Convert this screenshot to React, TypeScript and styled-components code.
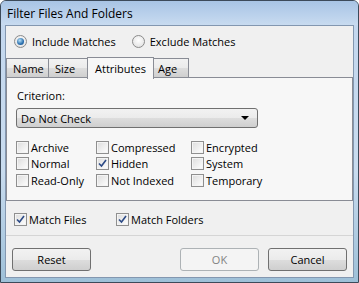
import styled, { createGlobalStyle } from 'styled-components'

const GlobalStyle = createGlobalStyle`
  html, body {
    margin: 0;
    padding: 0;
    background: #ffffff;
  }
  body {
    font-family: 'Open Sans', 'Noto Sans', sans-serif;
    font-size: 11px;
    color: #000;
  }
`

const Window = styled.div`
  width: 359px;
  height: 283px;
  box-sizing: border-box;
  border: 1px solid #3c4a5a;
  border-radius: 6px 6px 0 0;
  background: linear-gradient(to bottom, #a9c5e6 0%, #c3d7ee 20px, #c9dcef 60%, #9ec0d8 100%);
  display: flex;
  flex-direction: column;
  overflow: hidden;
`

const TitleBar = styled.div`
  height: 24px;
  padding-left: 6px;
  display: flex;
  align-items: center;
  font-size: 12px;
  background: linear-gradient(to bottom, #a8c4e5, #c8dbf0);
`

const Client = styled.div`
  flex: 1;
  margin: 0 4px 4px 4px;
  border: 1px solid #8397b0;
  background: #f0f0f0;
  display: flex;
  flex-direction: column;
`

const RadioRow = styled.div`
  display: flex;
  gap: 16px;
  padding: 8px 0 0 8px;
  height: 22px;
`

const Choice = styled.label`
  display: flex;
  align-items: center;
  gap: 5px;
  height: 14px;
`

const RadioDot = styled.span<{ $on?: boolean }>`
  width: 11px;
  height: 11px;
  border-radius: 50%;
  border: 1px solid #8b8b8b;
  background: radial-gradient(circle at 50% 40%, #ffffff, #dcdcdc);
  position: relative;
  &::after {
    content: '';
    display: ${(p) => (p.$on ? 'block' : 'none')};
    position: absolute;
    left: 2px;
    top: 2px;
    width: 7px;
    height: 7px;
    border-radius: 50%;
    background: radial-gradient(circle at 40% 35%, #b8e2f8, #2a6fae 60%, #1c4f86);
  }
`

const TabStrip = styled.div`
  display: flex;
  align-items: flex-end;
  height: 21px;
  margin-top: 1px;
  position: relative;
  z-index: 1;
`

const Tab = styled.div<{ $active?: boolean; $w: number }>`
  box-sizing: border-box;
  width: ${(p) => p.$w + (p.$active ? 4 : 0)}px;
  height: ${(p) => (p.$active ? '22px' : '20px')};
  margin: 0 ${(p) => (p.$active ? '-2px' : '0')} ${(p) => (p.$active ? '-1px' : '0')}
    ${(p) => (p.$active ? '-2px' : '-1px')};
  padding-left: ${(p) => (p.$active ? '7px' : '6px')};
  border: 1px solid #898c95;
  border-bottom: ${(p) => (p.$active ? 'none' : '1px solid #898c95')};
  display: flex;
  align-items: center;
  position: relative;
  z-index: ${(p) => (p.$active ? 2 : 1)};
  background: ${(p) =>
    p.$active ? '#f7f7f7' : 'linear-gradient(to bottom, #f2f2f2, #ebebeb 50%, #dddddd 51%, #cfcfcf)'};
  &:first-child {
    margin-left: 0;
  }
`

const Panel = styled.div`
  box-sizing: border-box;
  margin: -1px 0 0 0;
  border: 1px solid #898c95;
  background: #f7f7f7;
  height: 124px;
  padding: 10px 9px 0 9px;
`

const FieldLabel = styled.div`
  margin-left: 1px;
  height: 15px;
`

const Select = styled.div`
  box-sizing: border-box;
  margin-top: 5px;
  width: 242px;
  height: 20px;
  border: 1px solid #707070;
  border-radius: 3px;
  background: linear-gradient(to bottom, #f2f2f2, #ebebeb 50%, #dddddd 51%, #cfcfcf);
  display: flex;
  align-items: center;
  justify-content: space-between;
  padding: 0 8px 0 4px;
`

const Arrow = styled.span`
  width: 0;
  height: 0;
  border-left: 4px solid transparent;
  border-right: 4px solid transparent;
  border-top: 4px solid #000;
`

const Grid = styled.div`
  display: grid;
  grid-template-columns: 80px 95px 80px;
  grid-auto-rows: 16.5px;
  margin-top: 11px;
`

const Check = styled.span`
  box-sizing: border-box;
  width: 13px;
  height: 13px;
  border: 1px solid #8f8f8f;
  background: linear-gradient(135deg, #dcdcdc, #ffffff);
  box-shadow: inset 0 0 0 1px #f4f4f4;
  display: flex;
  align-items: center;
  justify-content: center;
`

const CheckItem = styled.label<{ $w?: number }>`
  display: flex;
  align-items: center;
  gap: 2px;
  width: ${(p) => (p.$w ? `${p.$w}px` : 'auto')};
`

const MatchRow = styled.div`
  display: flex;
  padding: 7px 0 0 8px;
  height: 22px;
`

const Separator = styled.div`
  height: 0;
  border-top: 1px solid #d5d5d5;
  margin-top: 5px;
`

const ButtonRow = styled.div`
  display: flex;
  gap: 9px;
  padding: 12px 6px 0 6px;
`

const Button = styled.button<{ $disabled?: boolean }>`
  box-sizing: border-box;
  width: 79px;
  height: 23px;
  border-radius: 3px;
  font-family: inherit;
  font-size: 11px;
  border: 1px solid ${(p) => (p.$disabled ? '#adb2b5' : '#707070')};
  color: ${(p) => (p.$disabled ? '#838383' : '#000')};
  background: ${(p) =>
    p.$disabled ? '#f4f4f4' : 'linear-gradient(to bottom, #f2f2f2, #ebebeb 50%, #dddddd 51%, #cfcfcf)'};
  padding: 0;
`

const Spacer = styled.div`
  flex: 1;
`

const Tick = () => (
  <svg width="9" height="9" viewBox="0 0 9 9">
    <path d="M1 4.5 L3.5 7 L8 1" fill="none" stroke="#2c4a86" strokeWidth="1.6" />
  </svg>
)

const CheckBox = ({ label, on, width }: { label: string; on?: boolean; width?: number }) => (
  <CheckItem $w={width}>
    <Check>{on && <Tick />}</Check>
    {label}
  </CheckItem>
)

const attributes = [
  ['Archive', 'Compressed', 'Encrypted'],
  ['Normal', 'Hidden', 'System'],
  ['Read-Only', 'Not Indexed', 'Temporary'],
]

const tabs = [
  { name: 'Name', w: 43 },
  { name: 'Size', w: 41 },
  { name: 'Attributes', w: 63 },
  { name: 'Age', w: 38 },
]

export default function App() {
  return (
    <>
      <GlobalStyle />
      <Window>
        <TitleBar>Filter Files And Folders</TitleBar>
        <Client>
          <RadioRow>
            <Choice>
              <RadioDot $on />
              Include Matches
            </Choice>
            <Choice>
              <RadioDot />
              Exclude Matches
            </Choice>
          </RadioRow>
          <TabStrip>
            {tabs.map((t) => (
              <Tab key={t.name} $w={t.w} $active={t.name === 'Attributes'}>
                {t.name}
              </Tab>
            ))}
          </TabStrip>
          <Panel>
            <FieldLabel>Criterion:</FieldLabel>
            <Select>
              Do Not Check
              <Arrow />
            </Select>
            <Grid>
              {attributes.flat().map((name) => (
                <CheckBox key={name} label={name} on={name === 'Hidden'} />
              ))}
            </Grid>
          </Panel>
          <MatchRow>
            <CheckBox label="Match Files" on width={102} />
            <CheckBox label="Match Folders" on />
          </MatchRow>
          <Separator />
          <ButtonRow>
            <Button>Reset</Button>
            <Spacer />
            <Button $disabled>OK</Button>
            <Button>Cancel</Button>
          </ButtonRow>
        </Client>
      </Window>
    </>
  )
}
